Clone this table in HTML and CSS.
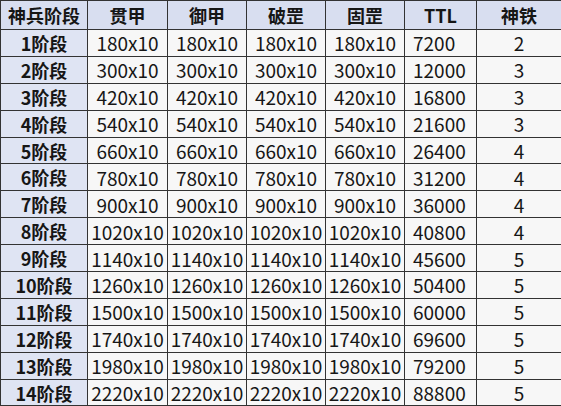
FILE: index.html
```html
<!DOCTYPE html>
<html lang="zh">
<head>
<meta charset="utf-8">
<link rel="stylesheet" href="styles.css">
</head>
<body>
<table class="tbl">
  <colgroup>
    <col class="c1"><col class="c2"><col class="c3"><col class="c4"><col class="c5"><col class="c6"><col class="c7">
  </colgroup>
  <thead>
    <tr class="head"><th>神兵阶段</th><th>贯甲</th><th>御甲</th><th>破罡</th><th>固罡</th><th>TTL</th><th>神铁</th></tr>
  </thead>
  <tbody>
    <tr><th>1阶段</th><td>180x10</td><td>180x10</td><td>180x10</td><td>180x10</td><td class="ttl">7200</td><td>2</td></tr>
    <tr><th>2阶段</th><td>300x10</td><td>300x10</td><td>300x10</td><td>300x10</td><td class="ttl">12000</td><td>3</td></tr>
    <tr><th>3阶段</th><td>420x10</td><td>420x10</td><td>420x10</td><td>420x10</td><td class="ttl">16800</td><td>3</td></tr>
    <tr><th>4阶段</th><td>540x10</td><td>540x10</td><td>540x10</td><td>540x10</td><td class="ttl">21600</td><td>3</td></tr>
    <tr><th>5阶段</th><td>660x10</td><td>660x10</td><td>660x10</td><td>660x10</td><td class="ttl">26400</td><td>4</td></tr>
    <tr><th>6阶段</th><td>780x10</td><td>780x10</td><td>780x10</td><td>780x10</td><td class="ttl">31200</td><td>4</td></tr>
    <tr><th>7阶段</th><td>900x10</td><td>900x10</td><td>900x10</td><td>900x10</td><td class="ttl">36000</td><td>4</td></tr>
    <tr><th>8阶段</th><td>1020x10</td><td>1020x10</td><td>1020x10</td><td>1020x10</td><td class="ttl">40800</td><td>4</td></tr>
    <tr><th>9阶段</th><td>1140x10</td><td>1140x10</td><td>1140x10</td><td>1140x10</td><td class="ttl">45600</td><td>5</td></tr>
    <tr><th>10阶段</th><td>1260x10</td><td>1260x10</td><td>1260x10</td><td>1260x10</td><td class="ttl">50400</td><td>5</td></tr>
    <tr><th>11阶段</th><td>1500x10</td><td>1500x10</td><td>1500x10</td><td>1500x10</td><td class="ttl">60000</td><td>5</td></tr>
    <tr><th>12阶段</th><td>1740x10</td><td>1740x10</td><td>1740x10</td><td>1740x10</td><td class="ttl">69600</td><td>5</td></tr>
    <tr><th>13阶段</th><td>1980x10</td><td>1980x10</td><td>1980x10</td><td>1980x10</td><td class="ttl">79200</td><td>5</td></tr>
    <tr><th>14阶段</th><td>2220x10</td><td>2220x10</td><td>2220x10</td><td>2220x10</td><td class="ttl">88800</td><td>5</td></tr>
  </tbody>
</table>
</body>
</html>
```
FILE: styles.css
```css
html, body {
  margin: 0;
  padding: 0;
  background: #f7f7f7;
}
.tbl {
  border-collapse: collapse;
  table-layout: fixed;
  width: 561px;
  font-family: "Noto Sans CJK SC", "Noto Sans", sans-serif;
  color: #161616;
}
.c1 { width: 87px; }
.c2 { width: 80px; }
.c3 { width: 79px; }
.c4 { width: 79px; }
.c5 { width: 79px; }
.c6 { width: 72px; }
.c7 { width: 85px; }
.tbl th,
.tbl td {
  border: 1px solid #333;
  padding: 0;
  text-align: center;
  white-space: nowrap;
  overflow: hidden;
  line-height: 1;
}
.tbl td {
  font-size: 19px;
  font-weight: 400;
  background: #f7f7f7;
  height: 25.9px;
}
.tbl th {
  font-size: 18px;
  font-weight: 700;
  background: #dfe4f3;
}
.head th {
  height: 28px;
  background: #d8def0;
}
.tbl td.ttl {
  text-align: left;
  padding-left: 8px;
}
```
